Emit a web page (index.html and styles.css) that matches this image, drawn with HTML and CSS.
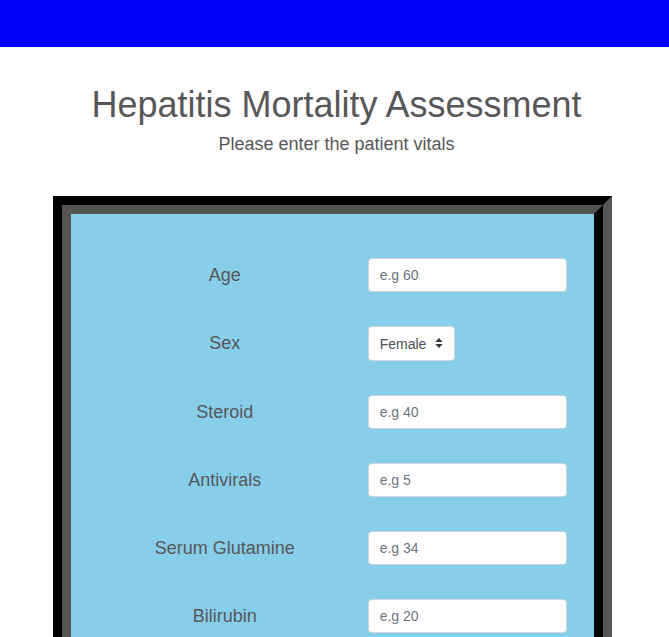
FILE: index.html
```html
<!DOCTYPE html>
<html lang="en">
<head>
<meta charset="utf-8">
<meta name="viewport" content="width=device-width, initial-scale=1">
<title>Hepatitis Mortality Assessment</title>
<link rel="stylesheet" href="styles.css">
</head>
<body>
<nav class="topbar"></nav>
<header class="intro">
  <h1 class="title">Hepatitis Mortality Assessment</h1>
  <p class="subtitle">Please enter the patient vitals</p>
</header>
<main class="content">
  <form class="panel">
    <div class="row">
      <label class="label" for="age">Age</label>
      <input class="field" id="age" type="text" placeholder="e.g 60">
    </div>
    <div class="row">
      <label class="label" for="sex">Sex</label>
      <div class="select-wrap">
        <select class="field select" id="sex">
          <option>Female</option>
          <option>Male</option>
        </select>
        <svg class="caret" viewBox="0 0 8 10" aria-hidden="true"><path d="M4 0 7.8 4H.2zM4 10 .2 6h7.6z"/></svg>
      </div>
    </div>
    <div class="row">
      <label class="label" for="steroid">Steroid</label>
      <input class="field" id="steroid" type="text" placeholder="e.g 40">
    </div>
    <div class="row">
      <label class="label" for="antivirals">Antivirals</label>
      <input class="field" id="antivirals" type="text" placeholder="e.g 5">
    </div>
    <div class="row">
      <label class="label" for="glutamine">Serum Glutamine</label>
      <input class="field" id="glutamine" type="text" placeholder="e.g 34">
    </div>
    <div class="row">
      <label class="label" for="bilirubin">Bilirubin</label>
      <input class="field" id="bilirubin" type="text" placeholder="e.g 20">
    </div>
  </form>
</main>
</body>
</html>
```
FILE: styles.css
```css
* {
  box-sizing: border-box;
}

body {
  margin: 0;
  background: #fff;
  color: #575757;
  font-family: "Liberation Sans", Arial, sans-serif;
  font-size: 18px;
}

.topbar {
  height: 47px;
  background: #00f;
}

.intro {
  padding: 36px 0 40px 4px;
  text-align: center;
}

.title {
  margin: 0;
  font-size: 36px;
  font-weight: 400;
  line-height: 44px;
}

.subtitle {
  margin: 4px 0 0;
  padding-top: 1px;
  line-height: 24px;
}

.content {
  padding: 0 57px 0 53px;
}

.panel {
  display: grid;
  gap: 34px;
  padding: 44px 27px;
  border: 18px groove #000;
  background: #87ceeb;
}

.row {
  display: grid;
  grid-template-columns: 14fr 11fr;
  column-gap: 16px;
  align-items: center;
}

.label {
  text-align: center;
}

.field {
  width: 100%;
  height: 34px;
  padding: 0 11px;
  border: 1px solid #ced4da;
  border-radius: 4px;
  background: #fff;
  color: #495057;
  font: 14px "Liberation Sans", Arial, sans-serif;
}

.field::placeholder {
  color: #6c757d;
  opacity: 1;
}

.select-wrap {
  position: relative;
  justify-self: start;
  display: flex;
}

.select {
  appearance: none;
  width: auto;
  height: 35px;
  padding-right: 27px;
}

.caret {
  position: absolute;
  top: 12px;
  right: 12px;
  width: 8px;
  height: 10px;
  fill: #343a40;
  pointer-events: none;
}
```
